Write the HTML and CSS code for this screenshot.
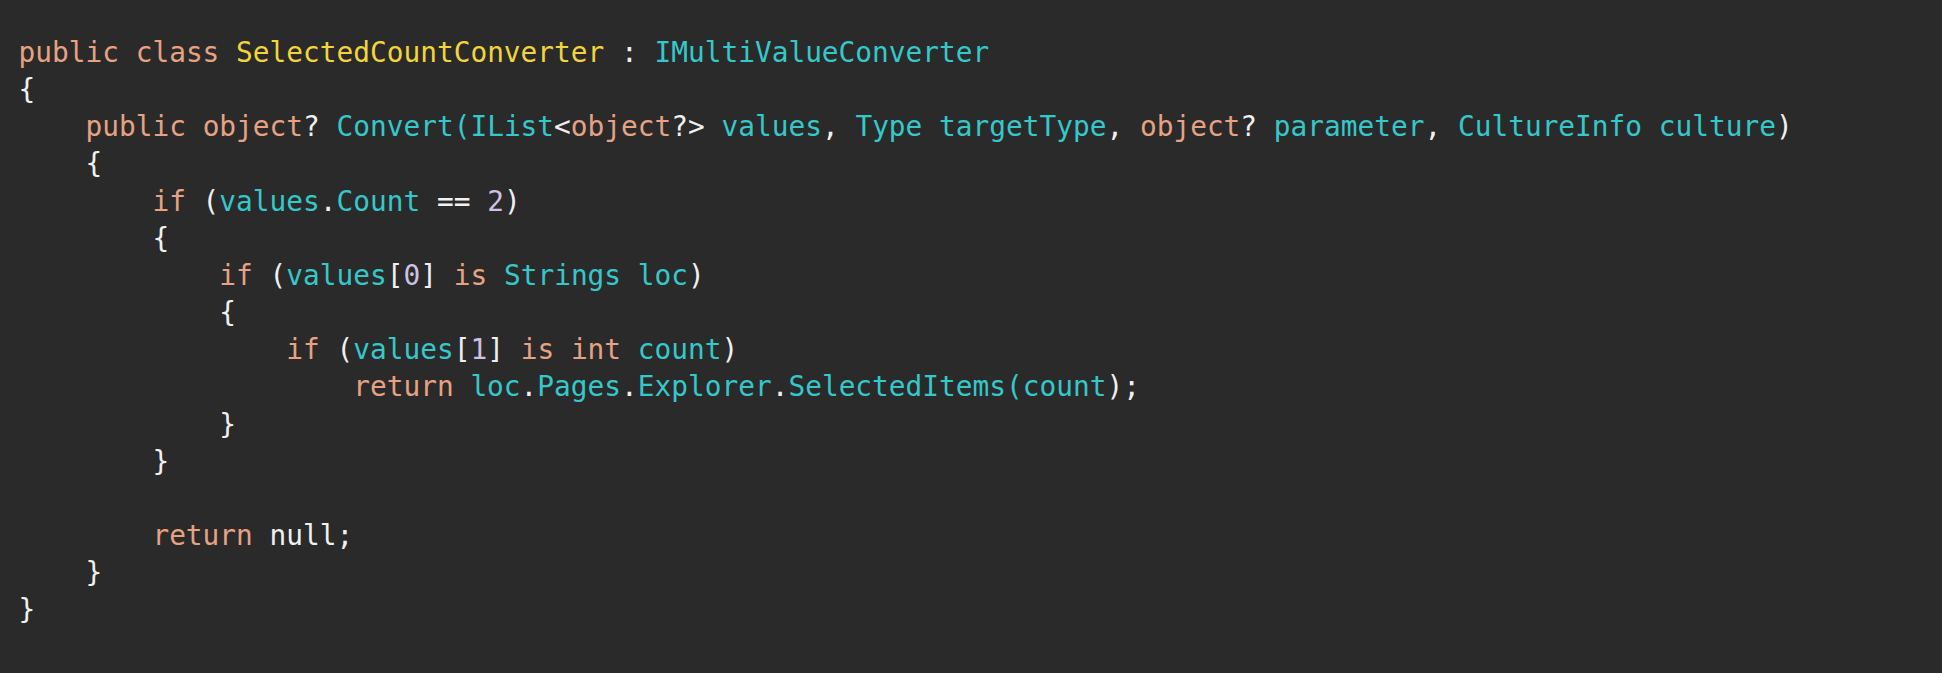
FILE: index.html
```html
<!DOCTYPE html>
<html>
<head>
<meta charset="utf-8">
<link rel="stylesheet" href="styles.css">
</head>
<body>
<pre class="code"><span class="k">public</span> <span class="k">class</span> <span class="t">SelectedCountConverter</span> : <span class="c">IMultiValueConverter</span>
{
    <span class="k">public</span> <span class="k">object</span>? <span class="c">Convert(IList</span>&lt;<span class="k">object</span>?&gt; <span class="c">values</span>, <span class="c">Type</span> <span class="c">targetType</span>, <span class="k">object</span>? <span class="c">parameter</span>, <span class="c">CultureInfo</span> <span class="c">culture</span>)
    {
        <span class="k">if</span> (<span class="c">values</span>.<span class="c">Count</span> == <span class="n">2</span>)
        {
            <span class="k">if</span> (<span class="c">values</span>[<span class="n">0</span>] <span class="k">is</span> <span class="c">Strings</span> <span class="c">loc</span>)
            {
                <span class="k">if</span> (<span class="c">values</span>[<span class="n">1</span>] <span class="k">is</span> <span class="k">int</span> <span class="c">count</span>)
                    <span class="k">return</span> <span class="c">loc</span>.<span class="c">Pages</span>.<span class="c">Explorer</span>.<span class="c">SelectedItems(count</span>);
            }
        }

        <span class="k">return</span> null;
    }
}</pre>
</body>
</html>
```

FILE: styles.css
```css
html, body {
  margin: 0;
  padding: 0;
  background: #2a2a2a;
  height: 100%;
}
.code {
  margin: 0;
  padding: 34px 0 0 18.5px;
  font-family: "DejaVu Sans Mono", monospace;
  font-size: 27.8px;
  line-height: 37.16px;
  color: #f0f0f0;
  white-space: pre;
}
.k { color: #e6a283; }
.t { color: #f2d43c; }
.c { color: #35c8cb; }
.n { color: #cfc1e5; }
```
